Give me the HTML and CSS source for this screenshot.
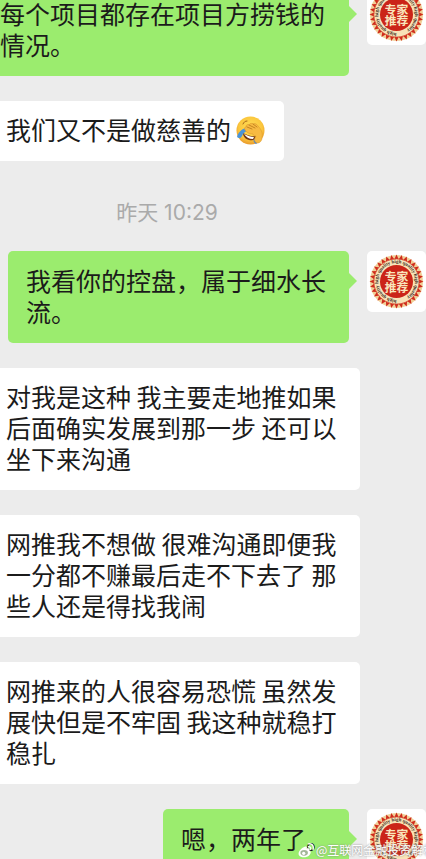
FILE: index.html
```html
<!DOCTYPE html>
<html lang="zh-CN">
<head>
<meta charset="utf-8">
<meta name="viewport" content="width=device-width, initial-scale=1">
<title>聊天</title>
<link rel="stylesheet" href="styles.css">
</head>
<body>
<svg class="defs" aria-hidden="true">
  <defs>
    <path id="ring" d="M30 48.800a18.800 18.800 0 1 1 .1 0"/>
    <path id="tooth" d="M30 2.600l2.300 5h-4.600z" fill="#cf2b1c"/>
    <g id="teeth2"><use href="#tooth"/><use href="#tooth" transform="rotate(11.250 30 30)"/></g>
    <g id="teeth4"><use href="#teeth2"/><use href="#teeth2" transform="rotate(22.500 30 30)"/></g>
    <g id="teeth8"><use href="#teeth4"/><use href="#teeth4" transform="rotate(45 30 30)"/></g>
    <g id="teeth16"><use href="#teeth8"/><use href="#teeth8" transform="rotate(90 30 30)"/></g>
    <symbol id="seal" viewBox="0 0 60 60">
      <circle cx="30" cy="30" r="27" fill="#f0cf97"/>
      <use href="#teeth16"/><use href="#teeth16" transform="rotate(180 30 30)"/>
      <circle cx="30" cy="30" r="23" fill="#f8e3b8" stroke="#d5452f" stroke-width=".8"/>
      <circle cx="30" cy="30" r="16.800" fill="#cb2418"/>
      <text class="seal-ring"><textPath href="#ring">high quality high quality high quality high quality</textPath></text>
      <text class="seal-text" x="24" y="29" text-anchor="middle">专</text>
      <text class="seal-text" x="36" y="29" text-anchor="middle">家</text>
      <text class="seal-text" x="24" y="41" text-anchor="middle">推</text>
      <text class="seal-text" x="36" y="41" text-anchor="middle">荐</text>
    </symbol>
  </defs>
</svg>
<main class="chat">
  <div class="row sent first">
    <p class="bubble">每个项目都存在项目方捞钱的情况。</p>
    <svg class="avatar" role="img" aria-label="头像"><use href="#seal"/></svg>
  </div>
  <div class="row received">
    <p class="bubble">我们又不是做慈善的<svg class="emoji" viewBox="0 0 29 29" role="img" aria-label="捂脸">
      <defs>
        <radialGradient id="face" cx=".5" cy=".4" r=".6"><stop offset="0" stop-color="#ffdf58"/><stop offset=".7" stop-color="#fbc63d"/><stop offset="1" stop-color="#e99a2c"/></radialGradient>
      </defs>
      <circle cx="14.500" cy="14.500" r="14" fill="url(#face)"/>
      <path d="M7 17c4 2 9 4 13 3 0 4-4 5-7 4-4-1-6-4-6-7z" fill="#713512"/>
      <path d="M8 18c4 2 7 3 10 3l-1 2c-4 0-7-2-9-5z" fill="#fff"/>
      <path d="M10 12c-5 1-8 5-9 9 2 2 4 1 5-1 1-3 3-4 5-5z" fill="#4a94d8"/>
      <path d="M18 23c2 0 4 1 5 3l-3 2c-2-1-3-3-2-5z" fill="#4a86cf"/>
      <path d="M9 14c-1-2 0-3 1-3 0-2 1-3 3-2 1-2 3-2 4-1 2-1 4 0 5 2 3 3 5 7 4 11 0 4-2 6-5 6-3-1-3-4-1-7-2 0-3-1-3-2-3 0-6-1-8-4z" fill="#f7ba42" stroke="#dd9a2c" stroke-width=".6"/>
      <path d="M11 11l5 2M13 9l6 3M17 8l4 3" fill="none" stroke="#b87618" stroke-width=".8" stroke-linecap="round"/>
      <path d="M7 8c1-2 2-3 4-3" fill="none" stroke="#9a5a16" stroke-width=".9" stroke-linecap="round"/>
    </svg></p>
  </div>
  <time class="stamp">昨天 10:29</time>
  <div class="row sent">
    <p class="bubble">我看你的控盘，属于细水长流。</p>
    <svg class="avatar" role="img" aria-label="头像"><use href="#seal"/></svg>
  </div>
  <div class="row received">
    <p class="bubble">对我是这种 我主要走地推如果后面确实发展到那一步 还可以坐下来沟通</p>
  </div>
  <div class="row received">
    <p class="bubble">网推我不想做 很难沟通即便我一分都不赚最后走不下去了 那些人还是得找我闹</p>
  </div>
  <div class="row received">
    <p class="bubble">网推来的人很容易恐慌 虽然发展快但是不牢固 我这种就稳打稳扎</p>
  </div>
  <div class="row sent">
    <p class="bubble">嗯，两年了。</p>
    <svg class="avatar" role="img" aria-label="头像"><use href="#seal"/></svg>
  </div>
  <div class="watermark">
    <svg class="weibo" viewBox="0 0 18 16" aria-hidden="true">
      <path d="M7 4c2-1 3 0 2 2 2-1 4 0 3 2 2 1 2 3 0 5-3 3-9 3-11 0C-1 10 4 5 7 4z" fill="#fff"/>
      <ellipse cx="6.500" cy="10.500" rx="4" ry="3" fill="#a3b598"/>
      <circle cx="6" cy="11" r="1.700" fill="#fff"/>
      <path d="M11 1c4-1 6 2 5 6M11 4c2 0 3 1 2 3" fill="none" stroke="#fff" stroke-width="1.400" stroke-linecap="round"/>
    </svg>
    <span>@互联网金融投资解析</span>
  </div>
</main>
</body>
</html>
```
FILE: styles.css
```css
* {
  box-sizing: border-box;
}

body {
  margin: 0;
  background: #ececec;
  color: #1b1b1b;
  font-family: "Noto Sans CJK SC", sans-serif;
}

.defs {
  position: absolute;
  width: 0;
  height: 0;
}

.chat {
  position: relative;
  display: flex;
  flex-direction: column;
  gap: 25px;
  height: 100vh;
  overflow: hidden;
}

.chat > * {
  flex-shrink: 0;
}

.row {
  display: flex;
  align-items: flex-start;
}

.bubble {
  position: relative;
  margin: 0;
  border-radius: 5px;
  font-size: 25px;
  line-height: 31px;
}

.received {
  margin-left: -14px;
  padding-right: 66px;
}

.received .bubble {
  padding: 13px 19px 16px 20px;
  background: #fff;
}

.sent {
  justify-content: flex-end;
  gap: 18px;
  padding-left: 8px;
}

.sent .bubble {
  padding: 14px 18px 16px;
  background: #9bec6e;
}

.sent .bubble::after {
  content: "";
  position: absolute;
  top: 22px;
  left: 100%;
  border: 8px solid transparent;
  border-left-color: #9bec6e;
  border-right-width: 0;
}

/* The log is scrolled, so the first message is partly above the top. */
.first {
  margin-top: -16px;
  margin-left: -26px;
}

.avatar {
  flex: none;
  width: 59px;
  height: 61px;
  border-radius: 5px;
  background: #fff;
}

.seal-text {
  fill: #f9e6bd;
  font-size: 12px;
  font-weight: 700;
}

.seal-ring {
  fill: #3a2a1c;
  font-family: "Liberation Serif", serif;
  font-size: 5px;
  font-weight: 700;
}

.emoji {
  width: 29px;
  height: 29px;
  margin-left: 5px;
  vertical-align: -5px;
}

.stamp {
  padding: 13px 92px 0 0;
  color: #aaa;
  font-family: Inter, "Noto Sans CJK SC", sans-serif;
  font-size: 21px;
  line-height: 27px;
  text-align: center;
}

.watermark {
  position: absolute;
  bottom: 0;
  left: 298px;
  display: flex;
  align-items: center;
  gap: 1px;
  color: #fff;
  font-size: 12px;
  line-height: 18px;
  white-space: nowrap;
  text-shadow: 0 0 2px #777;
}

.weibo {
  width: 17px;
  height: 15px;
}
```
